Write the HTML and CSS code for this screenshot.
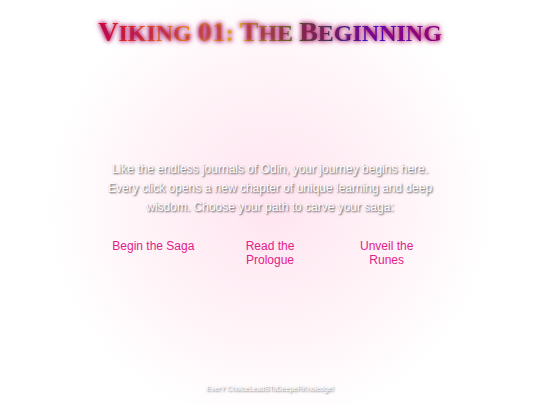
FILE: index.html
```html
<!DOCTYPE html>
<html lang="en">
<head>
    <meta charset="UTF-8">
    <meta name="viewport" content="width=device-width, initial-scale=1.0">
    <title>Viking 01: The Beginning</title>
    <link rel="stylesheet" href="styles.css">
</head>
<body>
    <header>
        <h1><span class="initial">V</span>iking <span class="initial">01</span>: <span class="initial">T</span>he <span class="initial">B</span>eginning</h1>
    </header>
    <main>
        <p class="intro">Like the endless journals of Odin, your journey begins here. Every click opens a new chapter of unique learning and deep wisdom. Choose your path to carve your saga:</p>
        <nav class="paths">
            <a href="#saga">Begin the Saga</a>
            <a href="#prologue">Read the Prologue</a>
            <a href="#runes">Unveil the Runes</a>
        </nav>
    </main>
    <footer>
        <p>EverY ChoiceLeadSToDeepeRKnoledge!</p>
    </footer>
</body>
</html>
```

FILE: styles.css
```css
body {
    display: flex;
    flex-direction: column;
    align-items: center;
    min-height: 100vh;
    margin: 0;
    box-sizing: border-box;
    font-family: "Liberation Sans", Arial, sans-serif;
    text-align: center;
    background: radial-gradient(circle closest-side, #ffe4ef, #fff 110%) #fff;
}
header {
    padding-top: 16px;
}
h1 {
    margin: 0;
    font-family: "Liberation Serif", "Times New Roman", serif;
    font-size: 24px;
    line-height: 32px;
    font-weight: bold;
    text-transform: uppercase;
    background: linear-gradient(to right, red, orange, yellow, green, blue, purple);
    -webkit-background-clip: text;
    background-clip: text;
    color: transparent;
    text-shadow: 0 0 4px rgb(170, 10, 100), 0 0 6px rgba(170, 10, 100, 0.6);
}
.initial {
    font-size: 28px;
}
main {
    flex: 1;
    display: flex;
    flex-direction: column;
    justify-content: center;
    gap: 22px;
    max-width: 350px;
    padding-bottom: 8px;
}
.intro {
    margin: 0;
    padding: 0 8px;
    font-size: 12px;
    line-height: 19px;
    color: #fff;
    text-shadow: 1px 1px 2px rgba(0, 0, 0, 0.7);
}
.paths {
    display: grid;
    grid-template-columns: repeat(3, 1fr);
}
.paths a {
    padding: 0 16px;
    font-size: 12px;
    line-height: 14px;
    color: #e0218a;
    text-decoration: none;
}
footer p {
    margin: 0 0 12px;
    font-size: 7px;
    line-height: 8px;
    color: #fff;
    text-shadow: 1px 1px 2px rgba(0, 0, 0, 0.6);
}
```
